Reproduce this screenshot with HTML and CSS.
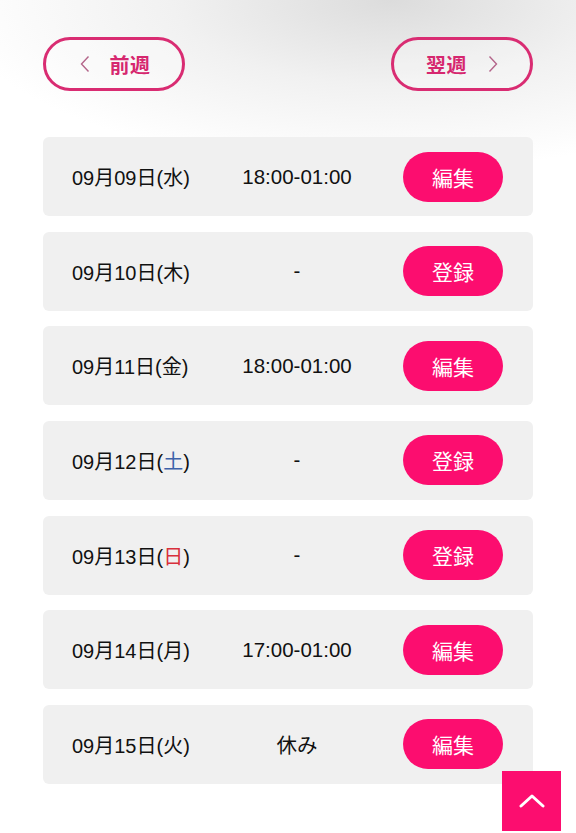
FILE: index.html
```html
<!DOCTYPE html>
<html lang="ja">
<head>
<meta charset="utf-8">
<title>シフト</title>
<link rel="stylesheet" href="styles.css">
</head>
<body>
<div class="page">
  <nav class="week-nav">
    <a class="week-btn prev" href="#"><svg class="chev" width="10" height="18" viewBox="0 0 10 18"><path d="M8.5 1.5 L1.5 9 L8.5 16.5" fill="none" stroke="#b4658a" stroke-width="1.4"/></svg><span class="label">前週</span></a>
    <a class="week-btn next" href="#"><span class="label">翌週</span><svg class="chev" width="10" height="18" viewBox="0 0 10 18"><path d="M1.5 1.5 L8.5 9 L1.5 16.5" fill="none" stroke="#b4658a" stroke-width="1.4"/></svg></a>
  </nav>
  <ul class="days">
    <li class="day"><span class="date">09月09日(水)</span><span class="time">18:00-01:00</span><a class="act" href="#">編集</a></li>
    <li class="day"><span class="date">09月10日(木)</span><span class="time">-</span><a class="act" href="#">登録</a></li>
    <li class="day"><span class="date">09月11日(金)</span><span class="time">18:00-01:00</span><a class="act" href="#">編集</a></li>
    <li class="day"><span class="date">09月12日(<span class="sat">土</span>)</span><span class="time">-</span><a class="act" href="#">登録</a></li>
    <li class="day"><span class="date">09月13日(<span class="sun">日</span>)</span><span class="time">-</span><a class="act" href="#">登録</a></li>
    <li class="day"><span class="date">09月14日(月)</span><span class="time">17:00-01:00</span><a class="act" href="#">編集</a></li>
    <li class="day"><span class="date">09月15日(火)</span><span class="time">休み</span><a class="act" href="#">編集</a></li>
  </ul>
</div>
<a class="to-top" href="#" aria-label="ページトップへ">
  <svg width="26" height="16" viewBox="0 0 26 16"><path d="M2 13 L13 3 L24 13" fill="none" stroke="#fff" stroke-width="3" stroke-linecap="round" stroke-linejoin="round"/></svg>
</a>
</body>
</html>
```
FILE: styles.css
```css
html, body {
  margin: 0;
  padding: 0;
}
body {
  min-height: 833px;
  background: radial-gradient(ellipse 440px 170px at 68% 0, #dcdcdc 0%, #f1f1f1 50%, #ffffff 100%) no-repeat, #ffffff;
  font-family: "Liberation Sans", Arial, "Noto Sans CJK JP", sans-serif;
  color: #111;
}
.page {
  padding: 37px 43px 40px;
}
.week-nav {
  display: flex;
  justify-content: space-between;
  margin-bottom: 46px;
}
.week-btn {
  box-sizing: border-box;
  width: 142px;
  height: 54px;
  border: 3px solid #d92c72;
  border-radius: 27px;
  display: flex;
  align-items: center;
  justify-content: center;
  text-decoration: none;
  color: #d6276f;
  background: rgba(255,255,255,0.25);
}
.week-btn .label {
  font-family: "Noto Sans CJK JP", sans-serif;
  font-weight: 700;
  font-size: 20px;
  letter-spacing: 0.5px;
}
.week-btn.prev .chev { margin-right: 20px; margin-left: 2px; }
.week-btn.next .chev { margin-left: 21px; }
.days {
  list-style: none;
  margin: 0;
  padding: 0;
  display: flex;
  flex-direction: column;
  gap: 15.67px;
}
.day {
  height: 79px;
  background: #f0f0f0;
  border-radius: 6px;
  display: flex;
  align-items: center;
  padding: 0 30px 0 29px;
  font-size: 20px;
}
.date {
  width: 130px;
  white-space: nowrap;
}
.time {
  width: 190px;
  text-align: center;
  font-size: 20.5px;
}
.sat { color: #3d62aa; }
.sun { color: #d8303c; }
.act {
  margin-left: auto;
  width: 100px;
  height: 50px;
  border-radius: 25px;
  background: #fc0d6f;
  color: #fff;
  text-decoration: none;
  display: flex;
  align-items: center;
  justify-content: center;
  font-family: "Noto Sans CJK JP", sans-serif;
  font-size: 21px;
  font-weight: 400;
}
.to-top {
  position: fixed;
  right: 15px;
  bottom: 2px;
  width: 59px;
  height: 60px;
  background: #fc0d6f;
  display: flex;
  align-items: center;
  justify-content: center;
}
```
